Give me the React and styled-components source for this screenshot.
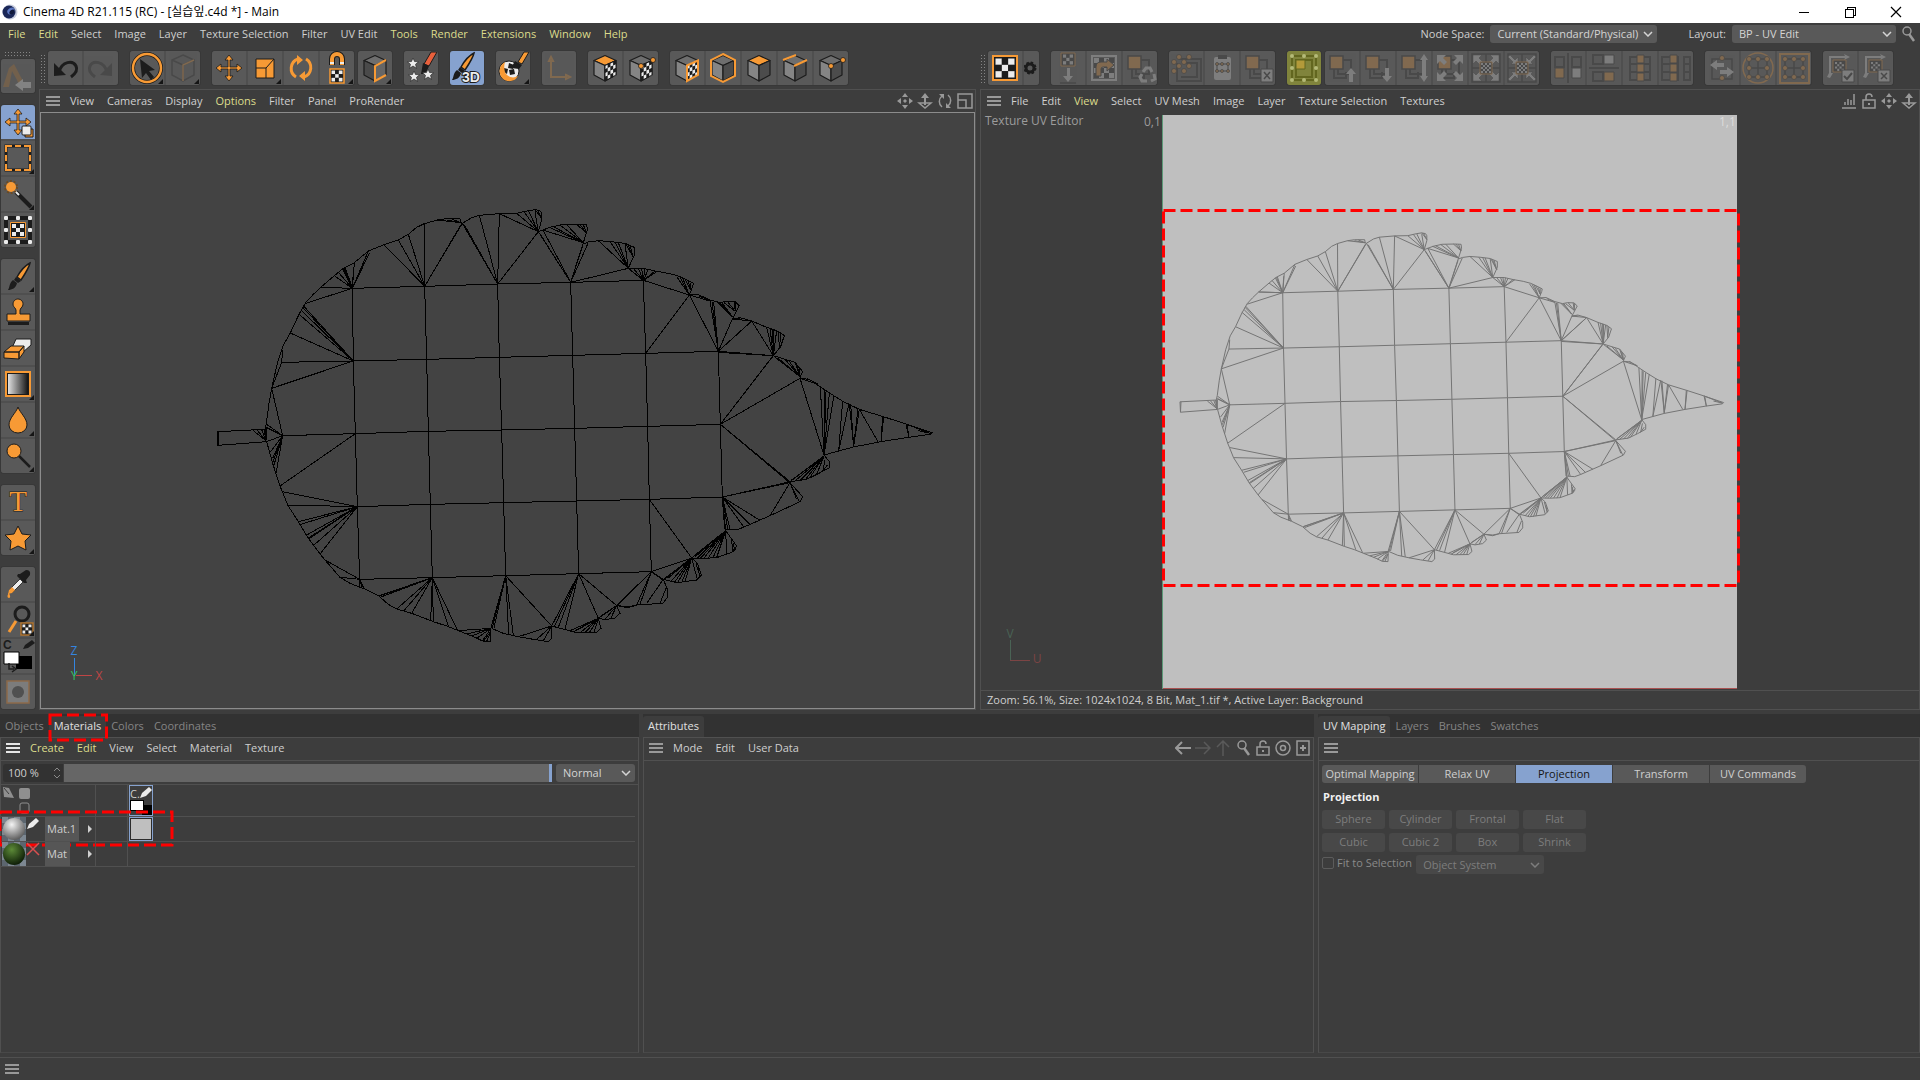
import React from 'react'
import styled, { createGlobalStyle, css } from 'styled-components'

const O = '#f79a35'
const K = '#1c1c1c'
const W = '#ececec'

/* ---------- leaf mesh ---------- */

const gridRows = [
  [362, 292, 457, 295, 674, 289, 893, 282, 1112, 277, 1330, 271],
  [245, 517, 460, 513, 680, 508, 898, 502, 1118, 496, 1337, 490, 1555, 484, 1720, 497],
  [248, 737, 466, 731, 685, 724, 905, 720, 1124, 715, 1343, 709, 1561, 703],
  [472, 950, 691, 943, 911, 938, 1130, 933, 1348, 928, 1567, 921],
  [479, 1168, 697, 1163, 917, 1157, 1136, 1151, 1354, 1145],
]

const gridCols = [
  [457, 295, 460, 513, 466, 731, 472, 950, 479, 1168],
  [674, 289, 680, 508, 685, 724, 691, 943, 697, 1163],
  [893, 282, 898, 502, 905, 720, 911, 938, 917, 1157],
  [1112, 277, 1118, 496, 1124, 715, 1130, 933, 1136, 1151],
  [1330, 271, 1337, 490, 1343, 709, 1348, 928, 1354, 1145],
  [1555, 484, 1561, 703, 1567, 921, 1577, 1022],
]

const outline = [
  [200, 755, 54, 766, 52, 725, 195, 718, 199, 700, 207, 640, 215, 595, 232, 520, 250, 465, 271, 429, 296, 375, 317, 338, 338, 315, 362, 292, 403, 257, 430, 235, 463, 218, 505, 183, 552, 164, 595, 150, 625, 133, 650, 112, 673, 101, 712, 90, 740, 86, 780, 86, 782, 98, 787, 100],
  [787, 100, 815, 83, 838, 76, 898, 71, 950, 70, 985, 62, 1005, 59, 1020, 62, 1025, 70, 1025, 90, 1015, 125],
  [1015, 125, 1050, 112, 1085, 104, 1135, 103, 1160, 104, 1162, 120, 1150, 158],
  [1150, 162, 1165, 156, 1195, 152, 1235, 155, 1275, 160, 1303, 172, 1303, 195, 1285, 235],
  [1285, 235, 1330, 235, 1365, 243, 1405, 250, 1435, 258, 1465, 272, 1480, 280, 1478, 290, 1468, 315],
  [1468, 315, 1495, 314, 1530, 330, 1560, 338, 1580, 334, 1605, 335, 1618, 347, 1597, 387],
  [1597, 387, 1620, 383, 1655, 393, 1700, 412, 1735, 424, 1753, 437, 1742, 470, 1720, 497],
  [1720, 497, 1755, 508, 1785, 517, 1808, 545, 1800, 563],
  [1800, 565, 1828, 568, 1860, 590, 1890, 610, 1930, 635, 1978, 658, 2050, 680, 2118, 702, 2165, 718, 2195, 728, 2190, 733, 2125, 742, 2043, 755, 1960, 771, 1916, 783, 1872, 795],
  [1872, 795, 1888, 815, 1888, 833, 1855, 851, 1820, 868, 1770, 875],
  [1770, 878, 1808, 920, 1800, 935, 1710, 977, 1630, 1012, 1608, 1020, 1578, 1018],
  [1577, 1022, 1610, 1068, 1600, 1085, 1550, 1103, 1510, 1105, 1475, 1104],
  [1475, 1104, 1492, 1120, 1504, 1155, 1490, 1170, 1430, 1178, 1390, 1168],
  [1390, 1168, 1403, 1200, 1403, 1222, 1388, 1240, 1310, 1245, 1285, 1253, 1250, 1247],
  [1250, 1247, 1260, 1270, 1245, 1284, 1215, 1289, 1195, 1285],
  [1195, 1285, 1203, 1315, 1190, 1327, 1130, 1328, 1055, 1308],
  [1055, 1308, 1056, 1345, 1045, 1355, 1000, 1348, 955, 1340, 910, 1330, 875, 1315],
  [873, 1313, 872, 1355, 850, 1354, 825, 1342, 775, 1322, 740, 1308, 700, 1295, 635, 1270, 590, 1257, 565, 1243, 535, 1217, 492, 1196, 450, 1180, 420, 1162, 375, 1110, 360, 1092, 325, 1045, 295, 995, 263, 945, 247, 905, 240, 888, 218, 820, 200, 755],
]

// first pair is the hub, the others are the rim points it fans out to
const fans = [
  [198, 752, 160, 722, 172, 721, 185, 719, 195, 718, 192, 718, 199, 718, 199, 712],
  [54, 766, 56, 725],
  [248, 737, 200, 712, 200, 703, 200, 755, 212, 785, 218, 805, 219, 815, 222, 825, 228, 850, 215, 595, 202, 715],
  [245, 517, 215, 595, 248, 480],
  [460, 513, 311, 348, 305, 362, 308, 352, 296, 372, 271, 429, 215, 595],
  [457, 295, 317, 340, 362, 292, 403, 257, 415, 247, 428, 236, 432, 234, 436, 233, 463, 218, 461, 230, 505, 183, 508, 190],
  [674, 289, 552, 164, 595, 150, 625, 133, 673, 101, 787, 100, 783, 104],
  [782, 98, 712, 90, 740, 90, 755, 87],
  [1015, 125, 898, 71, 950, 70, 972, 65, 985, 62, 1005, 64],
  [1025, 85, 1005, 59, 1012, 60],
  [893, 282, 787, 100, 794, 106, 838, 76, 898, 71, 1015, 125],
  [1150, 158, 1048, 112, 1028, 120, 1080, 105, 1100, 104, 1060, 110],
  [1160, 130, 1130, 103, 1140, 103, 1150, 104],
  [1112, 277, 1015, 125, 1019, 130, 1030, 122, 1150, 158, 1148, 168, 1165, 158, 1285, 235],
  [1285, 235, 1195, 152, 1230, 155, 1245, 156, 1255, 158, 1275, 162],
  [1301, 205, 1278, 162, 1284, 165, 1290, 167],
  [1330, 271, 1285, 235, 1300, 235, 1315, 234, 1325, 235, 1335, 236, 1345, 238, 1365, 243, 1372, 244, 1468, 315],
  [1468, 315, 1430, 260, 1440, 262, 1448, 264, 1337, 490],
  [1472, 300, 1455, 268, 1465, 274, 1472, 278],
  [1530, 333, 1468, 315, 1498, 318],
  [1555, 484, 1468, 315, 1530, 333, 1536, 335, 1541, 336, 1597, 387, 1655, 393, 1651, 397],
  [1597, 387, 1655, 393, 1620, 386],
  [1597, 380, 1555, 338, 1560, 338, 1566, 339],
  [1606, 364, 1572, 338, 1582, 334, 1602, 335, 1608, 338],
  [1720, 497, 1655, 393, 1700, 412, 1710, 414, 1718, 417, 1722, 418, 1730, 422, 1555, 487],
  [1738, 472, 1735, 424, 1743, 430],
  [1561, 703, 1720, 497, 1717, 500, 1800, 565, 1770, 875, 1770, 879],
  [1800, 560, 1722, 499, 1735, 505, 1755, 508, 1768, 514, 1785, 517, 1790, 524, 1797, 532],
  [1855, 583, 1800, 565, 1822, 566],
  [1872, 795, 1800, 565, 1861, 590, 1874, 600, 1878, 605, 1888, 610, 1902, 616],
  [1916, 783, 1928, 632, 1947, 640],
  [1961, 768, 1948, 642, 1952, 642, 1974, 656, 1978, 658],
  [2034, 755, 1978, 658],
  [2043, 754, 2051, 680, 2048, 680],
  [2127, 742, 2118, 702, 2121, 705],
  [2190, 730, 2118, 702, 2155, 722],
  [1872, 798, 1770, 875, 1775, 870, 1785, 873, 1800, 872, 1815, 870, 1828, 865, 1850, 853],
  [1868, 845, 1875, 810, 1882, 825],
  [1567, 921, 1770, 878, 1767, 876],
  [1770, 878, 1790, 928, 1797, 934, 1710, 977],
  [1567, 921, 1680, 991, 1650, 1003, 1632, 1012, 1590, 1018, 1583, 1018, 1574, 1018],
  [1577, 1022, 1475, 1104, 1480, 1099, 1485, 1101, 1492, 1104, 1502, 1104, 1512, 1104, 1525, 1104, 1538, 1105, 1550, 1103, 1580, 1092],
  [1598, 1085, 1595, 1050, 1600, 1060, 1606, 1070, 1608, 1075],
  [1475, 1104, 1348, 928, 1354, 1145],
  [1475, 1104, 1390, 1168, 1396, 1166, 1405, 1164, 1412, 1175, 1424, 1176, 1433, 1178, 1445, 1178, 1455, 1176, 1492, 1168],
  [1500, 1160, 1488, 1120, 1494, 1135],
  [1354, 1145, 1390, 1168, 1386, 1168, 1250, 1247, 1310, 1245, 1320, 1243],
  [1390, 1168, 1340, 1240, 1385, 1172],
  [1380, 1240, 1398, 1195],
  [1136, 1151, 1250, 1247, 1195, 1285, 1055, 1308, 1063, 1310, 1075, 1312, 1095, 1318],
  [1250, 1247, 1195, 1285, 1200, 1280, 1215, 1288, 1232, 1286],
  [1195, 1285, 1120, 1326, 1128, 1320, 1140, 1328, 1155, 1328, 1168, 1328, 1182, 1328, 1110, 1322],
  [1055, 1308, 955, 1340, 1010, 1348, 1030, 1352],
  [1285, 1250, 1250, 1247, 1310, 1245],
  [917, 1157, 1055, 1308, 940, 1336, 926, 1333, 882, 1313, 873, 1313, 877, 1313],
  [873, 1315, 775, 1322, 800, 1332, 815, 1338, 830, 1345, 848, 1352],
  [872, 1325, 850, 1354, 860, 1354],
  [697, 1163, 540, 1216, 543, 1221, 537, 1218, 590, 1257, 612, 1262, 635, 1270, 692, 1293, 700, 1295, 745, 1308, 772, 1320],
  [479, 1168, 375, 1110, 420, 1162, 480, 1193, 492, 1196, 487, 1196],
  [472, 950, 247, 905, 263, 945, 295, 995, 303, 1003, 320, 1035, 325, 1044, 328, 1046, 340, 1067, 360, 1092],
  [466, 731, 240, 888],
]

const line = (p) => p.reduce((d, v, i) => d + (i === 0 ? 'M' : i % 2 ? ' ' : 'L') + v, '')

const fan = (p) => {
  let d = ''
  for (let i = 2; i < p.length; i += 2) {
    d += `M${p[0]} ${p[1]}L${p[i]} ${p[i + 1]}`
  }
  return d
}

const leafPath = [...gridRows, ...gridCols, ...outline].map(line).join('') + fans.map(fan).join('')

const Leaf = ({ color, crisp, ...rest }) => (
  <g {...rest}>
    <path
      d={leafPath}
      fill='none'
      stroke={color}
      strokeWidth='1'
      vectorEffect='non-scaling-stroke'
      shapeRendering={crisp ? 'crispEdges' : 'auto'}
    />
  </g>
)

/* ---------- icons ---------- */

const Checker = ({ n = 4, dark = K, light = W, transform }) => {
  const cells = []
  for (let r = 0; r < n; r++) {
    for (let c = 0; c < n; c++) {
      cells.push(
        <rect key={r + '-' + c} x={c / n} y={r / n} width={1 / n} height={1 / n} fill={(r + c) % 2 ? dark : light} />
      )
    }
  }
  return <g transform={transform}>{cells}</g>
}

const Cube = ({ top = '#6e6e6e', left = '#858585', right = '#4c4c4c', checker, hot, children }) => (
  <>
    <g stroke={K} strokeWidth='1.2' strokeLinejoin='round'>
      <path d='M17 4.500L28 9.500 17 14.500 6 9.500z' fill={top} />
      <path d='M6 9.500L17 14.500V30L6 24z' fill={left} />
      <path d='M28 9.500L17 14.500V30L28 24z' fill={right} />
    </g>
    {checker && <Checker transform='matrix(11 -5 0 15 17 14.500)' />}
    {checker && <path d='M28 9.500L17 14.500V30L28 24z' fill='none' stroke={hot ? O : K} strokeWidth={hot ? 2 : 1} />}
    {children}
  </>
)

const Dots = ({ points, r = 2.5, fill = O }) =>
  points.map(([x, y]) => <circle key={x + ',' + y} cx={x} cy={y} r={r} fill={fill} stroke={K} strokeWidth='0.800' />)

const FourWay = () => (
  <path
    d='M17 4l4 5h-3v7h7v-3l5 4-5 4v-3h-7v7h3l-4 5-4-5h3v-7H9v3l-5-4 5-4v3h7V9h-3z'
    fill={O}
    stroke={K}
    strokeWidth='0.800'
  />
)

const Stack = () => (
  <>
    <path d='M13 9h13v14H13z' fill='none' stroke={K} strokeWidth='2' />
    <path d='M9 18v9h12v-6' fill='none' stroke={K} strokeWidth='2' />
    <path d='M5 5h13v13H5z' fill={O} stroke={K} strokeWidth='1.500' />
  </>
)

const arrowUp = 'M26 17l5 6h-3v8h-4v-8h-3z'
const arrowDown = 'M26 31l5-6h-3v-8h-4v8h-3z'
const cornerArrows =
  'M4 4h9l-3 3 4 4-3 3-4-4-3 3zM30 4h-9l3 3-4 4 3 3 4-4 3 3zM4 30h9l-3-3 4-4-3-3-4 4-3-3zM30 30h-9l3-3-4-4 3-3 4 4 3-3z'
const innerArrows =
  'M13 13H6l2-2-5-5 2-2 5 5 3-3zM21 13h7l-2-2 5-5-2-2-5 5-3-3zM13 21H6l2 2-5 5 2 2 5-5 3 3zM21 21h7l-2 2 5 5-2 2-5-5-3 3z'
const ring8 = [[8, 8], [17, 8], [26, 8], [8, 17], [26, 17], [8, 26], [17, 26], [26, 26]]

const Brush = () => (
  <>
    <path d='M29 4c-4 2-9 7-13 14l4 3c4-6 8-12 9-17z' fill={O} stroke={K} strokeWidth='1.500' />
    <path d='M15 18l5 4-3 2-4-3zM12 21l4 3c-1 5-5 7-9 7 2-3 1-7 5-10z' fill={K} />
  </>
)

const icons = {
  content: (
    <>
      <path d='M8 9l5-4 11 21h-6l-2-5-5-9-3 16H2z' fill='#c07828' />
      <path d='M30 23v6H22v3l-8-6 8-6v3z' fill='#fff' />
    </>
  ),
  undo: (
    <>
      <path d='M11 21C14 10 25 9 28 15c2 4-1 8-5 11' fill='none' stroke={K} strokeWidth='3' />
      <path d='M6 12v13l12-1z' fill={K} />
    </>
  ),
  redo: (
    <>
      <path d='M23 21C20 10 9 9 6 15c-2 4 1 8 5 11' fill='none' stroke={K} strokeWidth='3' />
      <path d='M28 12v13l-12-1z' fill={K} />
    </>
  ),
  live: (
    <>
      <circle cx='17' cy='17' r='14' fill='none' stroke={K} strokeWidth='4' />
      <circle cx='17' cy='17' r='14' fill='none' stroke={O} strokeWidth='2.500' />
      <path d='M10 8l15 11-6 1 5 6-3 3-5-7-4 5z' fill={K} />
    </>
  ),
  ghostCube: (
    <>
      <path d='M17 4L28 9v15L17 30 6 24V9zM6 9l11 5M17 14v16M17 14l11-5' fill='none' stroke={K} strokeWidth='1.500' />
      <path d='M28 9l-11 5v16' fill='none' stroke={O} strokeWidth='1.500' />
    </>
  ),
  move: <FourWay />,
  moveTool: (
    <>
      <FourWay />
      <path d='M24 24h8v8h-8z' fill={O} stroke={K} />
      <rect x='21' y='21' width='9' height='9' rx='1' fill={W} stroke={K} />
    </>
  ),
  scale: (
    <>
      <path d='M8 8h18v19H8z' fill={O} stroke={K} />
      <path d='M8 17h10v10M18 17l8-9' fill='none' stroke={K} />
    </>
  ),
  rotate: (
    <>
      <g fill='none' stroke={O} strokeWidth='3'>
        <path d='M12 26A10 10 0 0 1 14 8' />
        <path d='M22 8a10 10 0 0 1-2 18' />
      </g>
      <path d='M13 4l6 5-6 5zM21 30l-6-5 6-5z' fill={O} />
    </>
  ),
  magnet: (
    <>
      <path d='M12 14V8a5 5 0 0 1 10 0v6' fill='none' stroke={K} strokeWidth='6' />
      <path d='M12 14V8a5 5 0 0 1 10 0v6' fill='none' stroke={O} strokeWidth='4' />
      <path d='M10 12h4M20 12h4' stroke={W} strokeWidth='2' />
      <path d='M10 18h14v14H10z' fill={K} stroke={O} strokeWidth='1.500' />
      <Checker n={3} transform='matrix(11 0 0 11 11.500 19.500)' />
    </>
  ),
  modelCube: (
    <Cube left='#4a4a4a' right='#666'>
      <path d='M28 9l-11 6v15l11-6' fill='none' stroke={O} strokeWidth='2' />
    </Cube>
  ),
  wizard: (
    <>
      <path d='M20 13L27 1h6L25 15z' fill='#e8603c' stroke={K} />
      <path d='M19 12l6 3c-2 6-4 8-8 8z' fill={K} />
      <g fill={W} stroke={K} strokeWidth='0.600'>
        <path d='M9 7l1.500 3.500 4 .300-3 2.500 1 4L9 15l-3.500 2.300 1-4-3-2.500 4-.300z' />
        <path d='M10 20l1.500 3.500 4 .300-3 2.500 1 4L10 28l-3.500 2.300 1-4-3-2.500 4-.300z' />
        <path d='M24 18l1.500 3.500 4 .300-3 2.500 1 4L24 26l-3.500 2.300 1-4-3-2.500 4-.300z' />
      </g>
    </>
  ),
  paint3d: (
    <>
      <g transform='translate(-5 -2)'>
        <Brush />
      </g>
      <text x='12' y='31' fontFamily='Liberation Sans' fontWeight='700' fontSize='14' fill={W} stroke={K} strokeWidth='2' paintOrder='stroke'>
        3D
      </text>
    </>
  ),
  paintBall: (
    <>
      <circle cx='13' cy='20' r='10' fill={W} stroke={K} />
      <path d='M13 12l5 2-1 4-5-1zM8 17l4 1-1 5-3-2zM13 19l5-1 1 5-5 1z' fill={K} />
      <path d='M9 11C3 14 2 22 6 27c5 5 13 4 16-2-5 3-11 1-13-4-1-3-1-7 0-10z' fill={O} />
      <path d='M22 11L28 1h5l-7 12z' fill={O} stroke={K} />
      <path d='M19 10l7 4-3 4-8-1z' fill={K} />
    </>
  ),
  axis: (
    <g fill='none' stroke={O} strokeWidth='2'>
      <path d='M9 10v16h15' />
      <path d='M7 10l2-4 2 4zM24 24l4 2-4 2z' />
    </g>
  ),
  polyChecker: <Cube top={O} checker />,
  pointChecker: (
    <Cube checker>
      <Dots points={[[17, 15], [29, 9]]} />
    </Cube>
  ),
  uvCube: <Cube checker hot />,
  objectCube: (
    <Cube>
      <path d='M17 3L29 9v16L17 31 5 25V9z' fill='none' stroke={O} strokeWidth='2' />
    </Cube>
  ),
  polyCube: <Cube top={O} />,
  edgeCube: (
    <Cube>
      <path d='M5 9l13-5M16 15l13-6' stroke={O} strokeWidth='2' />
    </Cube>
  ),
  pointCube: (
    <Cube>
      <Dots points={[[17, 15], [29, 9]]} />
    </Cube>
  ),
  checkerBoard: (
    <>
      <path d='M5 5h24v24H5z' fill={K} stroke={O} strokeWidth='2' />
      <Checker n={3} transform='matrix(19 0 0 19 7.500 7.500)' />
    </>
  ),
  gear: (
    <>
      <circle cx='6' cy='17' r='4' fill='none' stroke={K} strokeWidth='3' />
      <circle cx='6' cy='17' r='5.500' fill='none' stroke={K} strokeWidth='2' strokeDasharray='2.500 1.820' />
    </>
  ),
  texDown: (
    <>
      <path d='M10 2h14v13H10z' fill={K} stroke={O} />
      <Checker n={3} transform='matrix(10 0 0 10 12 3.500)' />
      <path d='M16 17h3v8h3l-5 6-5-6h4z' fill={W} />
      <path d='M9 32h16' stroke={K} strokeWidth='1.500' />
    </>
  ),
  texArrow: (
    <>
      <path d='M5 5h24v24H5z' fill='none' stroke={W} strokeWidth='2' />
      <Checker transform='matrix(20 0 0 20 7 7)' />
      <path d='M9 25v-9q0-5 5-5h6V8l7 6-7 6v-4h-4q-2 0-2 2v7z' fill={O} stroke={K} />
    </>
  ),
  recycle: (
    <>
      <Stack />
      <g fill='none' stroke={W} strokeWidth='3'>
        <path d='M20 21l3-4h4l2 4M31 23l1 5-4 2M24 30h-5l-2-4 2-3' />
      </g>
    </>
  ),
  points: (
    <>
      <path d='M10 8h22v22H8V12' fill='none' stroke={K} strokeWidth='2' />
      <path d='M14 12h14v14H12' fill='none' stroke={K} strokeWidth='2' />
      <Dots points={[[10, 6], [20, 6], [5, 11], [15, 11], [10, 15], [20, 15], [5, 20], [15, 20]]} />
    </>
  ),
  clipboard: (
    <>
      <rect x='9' y='6' width='17' height='23' rx='2' fill={W} />
      <path d='M13 4h9v4h-9z' fill={K} />
      <path d='M12 13h11v7H12z' fill='none' stroke={K} />
      <Dots r={1.5} points={[[12, 13], [17, 13], [23, 13], [12, 20], [17, 20], [23, 20]]} />
    </>
  ),
  stackX: (
    <>
      <Stack />
      <path d='M20 18h12v13H20z' fill={W} stroke={K} />
      <path d='M23 21l6 7M29 21l-6 7' stroke={K} strokeWidth='1.500' />
    </>
  ),
  frame: (
    <>
      <path d='M5 5h24v24H5z' fill='none' stroke='#62661f' strokeWidth='2' />
      <path d='M9 9h16v17H9z' fill='none' stroke='#62661f' strokeWidth='2' />
      <path d='M9 9h9v9H9z' fill='#b39a3a' stroke='#62661f' />
      <g fill='#b4ba78'>
        {[[5, 5], [17, 5], [29, 5], [5, 17], [29, 17], [5, 29], [17, 29], [29, 29]].map(([x, y]) => (
          <circle key={x + ',' + y} cx={x} cy={y} r='2' />
        ))}
      </g>
    </>
  ),
  stackUp: (
    <>
      <Stack />
      <path d={arrowUp} fill={W} />
    </>
  ),
  stackDown: (
    <>
      <Stack />
      <path d={arrowDown} fill={W} />
    </>
  ),
  stackBoth: (
    <>
      <Stack />
      <path d='M27 3l4 6h-2v16h2l-4 6-4-6h2V9h-2z' fill={W} />
    </>
  ),
  stackOut: (
    <>
      <Stack />
      <path d={cornerArrows} fill={W} />
    </>
  ),
  texOut: (
    <>
      <path d='M3 3h28v28H3zM3 17h28M17 3v28' fill='none' stroke={K} strokeWidth='1.500' />
      <path d={cornerArrows} fill={W} stroke={K} strokeWidth='0.500' />
      <path d='M11 11h12v12H11z' fill={K} stroke={O} />
      <Checker n={5} transform='matrix(10 0 0 10 12 12)' />
    </>
  ),
  texIn: (
    <>
      <path d='M3 3h28v28H3zM3 17h28M17 3v28' fill='none' stroke={K} strokeWidth='1.500' />
      <path d={innerArrows} fill={W} stroke={K} strokeWidth='0.500' />
      <path d='M11 11h12v12H11z' fill={K} stroke={O} />
      <Checker n={5} transform='matrix(10 0 0 10 12 12)' />
    </>
  ),
  mirrorH: (
    <>
      <path d='M17 2v30' stroke={K} strokeWidth='2' />
      <path d='M4 6h9v10H4zM21 6h9v10h-9z' fill='none' stroke={K} strokeWidth='2' />
      <path d='M4 17h9v10H4z' fill={O} stroke={K} />
      <path d='M21 17h9v10h-9z' fill={W} stroke={K} />
    </>
  ),
  mirrorV: (
    <>
      <path d='M2 17h30' stroke={K} strokeWidth='2' />
      <path d='M6 4h10v9H6zM6 21h10v9H6z' fill='none' stroke={K} strokeWidth='2' />
      <path d='M17 4h10v9H17z' fill={W} stroke={K} />
      <path d='M17 21h10v9H17z' fill={O} stroke={K} />
    </>
  ),
  stripA: (
    <>
      <path d='M7 6h20v23H7zM7 13h20M7 21h20' fill='none' stroke={K} strokeWidth='2' />
      <path d='M14 4h7v8h-7zM14 13h7v8h-7zM14 22h7v8h-7z' fill={O} stroke={K} />
    </>
  ),
  stripB: (
    <>
      <path d='M3 6h16v23H3zM3 13h16M3 21h16M25 6h6v23h-6zM25 13h6M25 21h6' fill='none' stroke={K} strokeWidth='2' />
      <path d='M11 4h7v8h-7zM11 13h7v8h-7zM11 22h7v8h-7z' fill={O} stroke={K} />
    </>
  ),
  swap: (
    <>
      <path d='M7 8h20v20H7z' fill='none' stroke={K} strokeWidth='1.500' />
      <path d='M5 14l7-5v3h7v4h-7v3zM29 21l-7-5v3h-7v4h7v3z' fill={W} />
      <Dots points={[[17, 7], [17, 27]]} />
    </>
  ),
  circleFit: (
    <>
      <circle cx='17' cy='17' r='15' fill='none' stroke={O} strokeWidth='1.500' />
      <path d='M8 8h18v18H8zM8 17h18M17 8v18' fill='none' stroke={K} strokeWidth='1.500' />
      <Dots points={ring8} />
    </>
  ),
  squareFit: (
    <>
      <path d='M3 3h29v29H3z' fill='none' stroke={O} strokeWidth='2' />
      <path d='M8 8h18v18H8zM8 17h18M17 8v18' fill='none' stroke={K} strokeWidth='1.500' />
      <Dots points={ring8} />
    </>
  ),
  applyUv: (
    <>
      <path d='M4 26l2-4V5h16l-1-2 6 3-6 3 1-2H8v15l2 0-3 5z' fill={W} />
      <path d='M10 9h13v12H10z' fill={K} stroke={O} />
      <Checker transform='matrix(9 0 0 9 12 11)' />
      <path d='M19 19h12v12H19z' fill={W} stroke={K} />
      <path d='M21 25l3 3 5-6' fill='none' stroke={K} strokeWidth='2' />
    </>
  ),
  cancelUv: (
    <>
      <path d='M4 26l2-4V5h16l-1-2 6 3-6 3 1-2H8v15l2 0-3 5z' fill={W} />
      <path d='M10 9h13v12H10z' fill={K} stroke={O} />
      <Checker transform='matrix(9 0 0 9 12 11)' />
      <path d='M19 19h12v12H19z' fill={W} stroke={K} />
      <path d='M22 22l6 6M28 22l-6 6' stroke={K} strokeWidth='1.500' />
    </>
  ),
  marquee: (
    <>
      <path d='M5 5h24v24H5z' fill='none' stroke={K} strokeWidth='3' />
      <path
        d='M5 11V5h6M14 5h6M23 5h6v6M29 14v6M29 23v6h-6M20 29h-6M11 29H5v-6M5 20v-6'
        fill='none'
        stroke={O}
        strokeWidth='2'
      />
    </>
  ),
  wand: (
    <>
      <path d='M15 15l15 15' stroke={K} strokeWidth='4' />
      <path d='M14 14l4 4' stroke={W} strokeWidth='2' />
      <circle cx='10' cy='10' r='6' fill='none' stroke='#6a4a24' strokeWidth='2' strokeDasharray='2 1.770' />
      <circle cx='10' cy='10' r='5' fill={O} />
    </>
  ),
  transformTex: (
    <>
      <path d='M5 5h24v24H5z' fill='none' stroke={K} strokeWidth='4' />
      <path d='M9.500 9.500h15v15h-15z' fill={K} stroke={O} />
      <Checker n={3} transform='matrix(12 0 0 12 11 11)' />
      <g fill={W}>
        {[[3, 3], [15, 3], [27, 3], [3, 15], [27, 15], [3, 27], [15, 27], [27, 27]].map(([x, y]) => (
          <rect key={x + ',' + y} x={x} y={y} width='4' height='4' rx='1' />
        ))}
      </g>
    </>
  ),
  brush: <Brush />,
  stamp: (
    <>
      <path d='M12 9a5 5 0 1 1 8 4l-1 2v4h10v7H6v-7h9v-4l-1-2c-1-1-2-2-2-4z' fill={O} stroke={K} />
      <path d='M7 27h21v3H7z' fill={K} />
    </>
  ),
  eraser: (
    <>
      <path d='M15 8h15v6l-9 8-10-5z' fill={W} stroke={K} />
      <path d='M10 15h13l-5 6H3zM3 21h15v7L3 27zM23 15v6l-5 7v-7z' fill={O} stroke={K} strokeLinejoin='round' />
    </>
  ),
  gradient: (
    <>
      <defs>
        <linearGradient id='ramp'>
          <stop offset='0' stopColor='#e0e0e0' />
          <stop offset='1' stopColor='#151515' />
        </linearGradient>
      </defs>
      <path d='M5 5h24v24H5z' fill={K} stroke={O} strokeWidth='2' />
      <path d='M7 7h20v20H7z' fill='url(#ramp)' />
    </>
  ),
  drop: <path d='M17 4c2 6 9 11 9 18a9 8 0 0 1-18 0C8 15 15 10 17 4z' fill={O} stroke={K} />,
  lens: (
    <>
      <path d='M18 17l11 11' stroke={K} strokeWidth='2.500' />
      <circle cx='13' cy='12' r='7' fill={O} stroke={K} />
    </>
  ),
  text: (
    <text x='17' y='26' textAnchor='middle' fontFamily='Liberation Serif' fontSize='29' fill={O} stroke={K} strokeWidth='1' paintOrder='stroke'>
      T
    </text>
  ),
  star: <path d='M17 5l4 8 9 1-6 6 1 9-8-4-8 4 1-9-6-6 9-1z' fill={O} stroke={K} strokeLinejoin='round' />,
  picker: (
    <>
      <path d='M19 7l6-4q5 0 4 5l-4 5 1 3-3 0-7-7 1-2z' fill={K} />
      <path d='M19 12l3 3-10 10-4 1 1-4z' fill={W} stroke={K} strokeWidth='0.800' />
      <path d='M11 20l3 3-3 3-4 1 1-4zM8 26c1 2 2 5 0 5s-2-3 0-5z' fill={O} />
    </>
  ),
  zoomTex: (
    <>
      <path d='M15 18L8 29' stroke={O} strokeWidth='3' />
      <circle cx='21' cy='11' r='7' fill='none' stroke={K} strokeWidth='3' />
      <path d='M20 20h12v12H20z' fill={K} stroke='#b07430' strokeWidth='1.500' />
      <Checker n={3} transform='matrix(9 0 0 9 21.500 21.500)' />
    </>
  ),
  colors: (
    <>
      <path d='M15 17h16v13H15z' fill='#000' />
      <path d='M3 13h15v12H3z' fill='#fff' stroke='#000' />
      <path d='M8 24v6h5M11 27l4 3-4 3' fill='none' stroke={K} strokeWidth='1.500' />
      <text x='2' y='10' fontFamily='Liberation Sans' fontWeight='700' fontSize='12' fill={K}>
        C
      </text>
      <path d='M22 10l2-4 7-5 3 3-7 5z' fill={K} />
    </>
  ),
  mask: (
    <>
      <path d='M6 6h22v22H6z' fill='#7c7c7c' stroke='#8c6a4a' strokeWidth='1.500' />
      <circle cx='17' cy='17' r='6' fill='#505050' />
    </>
  ),
}

/* ---------- small line icons ---------- */

const lineIcons = {
  pan: <path d='M8 0l3 4H5zM8 16l3-4H5zM0 8l4-3v6zM16 8l-4-3v6zM6 8l2-2 2 2-2 2z' fill='currentColor' />,
  dolly: (
    <>
      <path d='M8 0l4 5H4zM7 4h2v8H7z' fill='currentColor' />
      <path d='M2 10h12l-6 5z' fill='none' stroke='currentColor' strokeWidth='1.500' />
    </>
  ),
  orbit: (
    <>
      <path d='M5 14A7 7 0 0 1 5 3M11 2a7 7 0 0 1 0 11' fill='none' stroke='currentColor' strokeWidth='1.500' />
      <path d='M2 1h5v5zM14 15H9v-5z' fill='currentColor' />
    </>
  ),
  maximize: <path d='M1 1h14v14H1zM1 7h8v8' fill='none' stroke='currentColor' strokeWidth='1.500' />,
  histogram: <path d='M1 15h14M4 12V9M7 12V6M10 12V7M13 12V1' fill='none' stroke='currentColor' strokeWidth='1.500' />,
  lock: (
    <>
      <path d='M2 7h12v8H2zM5 7V4a3 3 0 0 1 6 0' fill='none' stroke='currentColor' strokeWidth='1.500' />
      <path d='M7 10h2v2H7z' fill='currentColor' />
    </>
  ),
  back: <path d='M16 8H1M7 2L1 8l6 6' fill='none' stroke='currentColor' strokeWidth='2' />,
  forward: <path d='M0 8h15M9 2l6 6-6 6' fill='none' stroke='currentColor' strokeWidth='1.500' />,
  up: <path d='M8 16V1M2 7l6-6 6 6' fill='none' stroke='currentColor' strokeWidth='1.500' />,
  search: (
    <>
      <circle cx='7' cy='5' r='4' fill='none' stroke='currentColor' strokeWidth='1.500' />
      <path d='M9 8l5 7' stroke='currentColor' strokeWidth='2.500' />
    </>
  ),
  target: (
    <g fill='none' stroke='currentColor' strokeWidth='1.500'>
      <circle cx='8' cy='8' r='7' />
      <circle cx='8' cy='8' r='2.500' />
    </g>
  ),
  add: (
    <>
      <path d='M2 1h12v14H2z' fill='none' stroke='currentColor' strokeWidth='1.500' />
      <path d='M8 5v6M5 8h6' stroke='currentColor' strokeWidth='2' />
    </>
  ),
  minimize: <path d='M3 8h10' stroke='currentColor' shapeRendering='crispEdges' />,
  restore: <path d='M3 5h8v8H3zM5 5V3h8v8h-2' fill='none' stroke='currentColor' shapeRendering='crispEdges' />,
  close: <path d='M3 3l10 10M13 3L3 13' stroke='currentColor' strokeWidth='1.200' />,
}

/* ---------- shared pieces ---------- */

const Burger = ({ bright }) => (
  <BurgerButton type='button' aria-label='Panel menu' $bright={bright}>
    <span />
    <span />
    <span />
  </BurgerButton>
)

const MenuItems = ({ items, hot = [], label }) => (
  <Menu aria-label={label}>
    {items.map((item) => (
      <MenuButton type='button' key={item} $hot={hot.includes(item)}>
        {item}
      </MenuButton>
    ))}
  </Menu>
)

const LineButton = ({ name, dim }) => (
  <SmallButton type='button' aria-label={name} $dim={dim}>
    <svg width='16' height='16' viewBox='0 0 16 16'>
      {lineIcons[name]}
    </svg>
  </SmallButton>
)

const Tools = ({ items, column, tight }) => (
  <ToolGroup $column={column} $tight={tight}>
    {items.map(({ name, off, active, more, olive, half }) => (
      <ToolButton type='button' key={name} aria-label={name} $active={active} $olive={olive} $half={half}>
        <svg width={half ? 15 : 34} height='34' viewBox={half ? '0 0 15 34' : '0 0 34 34'}>
          <g opacity={off ? 0.25 : 1}>{icons[name]}</g>
          {more && <path d='M28 33l5-5v5z' fill='#151515' />}
        </svg>
      </ToolButton>
    ))}
  </ToolGroup>
)

const DropDown = ({ label, value, width, off }) => (
  <SelectBox $width={width} $off={off}>
    <select aria-label={label} defaultValue={value} disabled={off}>
      <option>{value}</option>
    </select>
    <svg width='10' height='6' viewBox='0 0 10 6'>
      <path d='M1 1l4 4 4-4' fill='none' stroke='currentColor' strokeWidth='1.500' />
    </svg>
  </SelectBox>
)

const off = (...names) => names.map((name) => ({ name, off: true }))

const leftTools = [
  [{ name: 'content', off: true }],
  [{ name: 'moveTool', active: true }, { name: 'marquee', more: true }, { name: 'wand', more: true }, { name: 'transformTex' }],
  [
    { name: 'brush', more: true },
    { name: 'stamp' },
    { name: 'eraser' },
    { name: 'gradient', more: true },
    { name: 'drop', more: true },
    { name: 'lens', more: true },
  ],
  [{ name: 'text' }, { name: 'star', more: true }],
  [{ name: 'picker' }, { name: 'zoomTex', more: true }, { name: 'colors' }, { name: 'mask' }],
]

const mainTools = [
  [{ name: 'undo' }, { name: 'redo', off: true }],
  [{ name: 'live', more: true }, { name: 'ghostCube', off: true, more: true }],
  [{ name: 'move' }, { name: 'scale', more: true }, { name: 'rotate' }, { name: 'magnet', more: true }],
  [{ name: 'modelCube', more: true }],
  [{ name: 'wizard' }],
  [{ name: 'paint3d', active: true }],
  [{ name: 'paintBall', more: true }],
  [{ name: 'axis', off: true }],
  [{ name: 'polyChecker' }, { name: 'pointChecker' }],
  [{ name: 'uvCube' }, { name: 'objectCube' }, { name: 'polyCube' }, { name: 'edgeCube' }, { name: 'pointCube' }],
]

const uvTools = [
  [{ name: 'checkerBoard' }, { name: 'gear', half: true }],
  off('texDown', 'texArrow', 'recycle'),
  off('points', 'clipboard', 'stackX'),
  [{ name: 'frame', olive: true }],
  off('stackUp', 'stackDown', 'stackBoth', 'stackOut', 'texOut', 'texIn'),
  off('mirrorH', 'mirrorV', 'stripA', 'stripB'),
  off('swap', 'circleFit', 'squareFit'),
  off('applyUv', 'cancelUv'),
]

/* ---------- parts of the window ---------- */

const TitleBar = () => (
  <Title>
    <svg width='16' height='16' viewBox='0 0 16 16'>
      <circle cx='8' cy='8' r='7.500' fill='#c9cede' />
      <circle cx='7' cy='8' r='6.500' fill='#1a2757' />
      <ellipse cx='9' cy='7' rx='4' ry='3' fill='#5d78c4' transform='rotate(-35 9 7)' />
      <ellipse cx='10' cy='8' rx='3' ry='2' fill='#10183a' transform='rotate(-35 10 8)' />
    </svg>
    <h1>Cinema 4D R21.115 (RC) - [실습잎.c4d *] - Main</h1>
    <WindowButtons>
      {['minimize', 'restore', 'close'].map((name) => (
        <button type='button' key={name} aria-label={name}>
          <svg width='16' height='16' viewBox='0 0 16 16'>
            {lineIcons[name]}
          </svg>
        </button>
      ))}
    </WindowButtons>
  </Title>
)

const MainMenu = () => (
  <MenuBar>
    <MenuItems
      label='Main menu'
      items={['File', 'Edit', 'Select', 'Image', 'Layer', 'Texture Selection', 'Filter', 'UV Edit', 'Tools', 'Render', 'Extensions', 'Window', 'Help']}
      hot={['File', 'Edit', 'Tools', 'Render', 'Extensions', 'Window', 'Help']}
    />
    <Fill />
    <BarLabel>Node Space:</BarLabel>
    <DropDown label='Node Space' value='Current (Standard/Physical)' width={167} />
    <BarLabel $wide>Layout:</BarLabel>
    <DropDown label='Layout' value='BP - UV Edit' width={164} />
    <LineButton name='search' />
  </MenuBar>
)

const Viewport = () => (
  <Panel>
    <PanelHead>
      <Burger />
      <MenuItems label='View menu' items={['View', 'Cameras', 'Display', 'Options', 'Filter', 'Panel', 'ProRender']} hot={['Options']} />
      <Fill />
      <IconRow>
        <LineButton name='pan' />
        <LineButton name='dolly' />
        <LineButton name='orbit' />
        <LineButton name='maximize' />
      </IconRow>
    </PanelHead>
    <Stage $framed>
      <svg viewBox='0 0 933 595'>
        <Leaf color='#000' crisp transform='translate(159 77) scale(0.33333)' />
        <g fontFamily='Open Sans' fontSize='12' textAnchor='middle'>
          <path d='M33.500 545v18' stroke='#3485e0' />
          <path d='M35 562.500h16' stroke='#c04545' />
          <text x='33' y='542' fill='#3485e0'>Z</text>
          <text x='33' y='567' fill='#35c060'>Y</text>
          <text x='58' y='567' fill='#c04545'>X</text>
        </g>
      </svg>
    </Stage>
  </Panel>
)

const UvEditor = () => (
  <Panel>
    <PanelHead>
      <Burger />
      <MenuItems
        label='Texture view menu'
        items={['File', 'Edit', 'View', 'Select', 'UV Mesh', 'Image', 'Layer', 'Texture Selection', 'Textures']}
        hot={['View']}
      />
      <Fill />
      <IconRow>
        <LineButton name='histogram' />
        <LineButton name='lock' />
        <LineButton name='pan' />
        <LineButton name='dolly' />
      </IconRow>
    </PanelHead>
    <Stage>
      <svg viewBox='0 -1 938 578'>
        <rect x='182' y='2' width='574' height='574' fill='#bfbfbf' />
        <path d='M181.500 2v574' stroke='#5c9a78' />
        <path d='M182 575.500h574' stroke='#a85050' />
        <Leaf color='#757575' transform='translate(185.800 104.900) scale(0.25367)' />
        <rect x='182.500' y='97.500' width='575' height='375' fill='none' stroke='#f00' strokeWidth='3' strokeDasharray='12 5' />
        <g fontFamily='Open Sans' fontSize='12' fill='#9c9c9c'>
          <text x='4' y='12'>Texture UV Editor</text>
          <text x='163' y='13'>0,1</text>
          <text x='738' y='13' fill='#dcdcdc'>1,1</text>
        </g>
        <g fontFamily='Open Sans' fontSize='12' textAnchor='middle'>
          <path d='M29.500 527v21' stroke='#4a6355' />
          <path d='M29 547.500h20' stroke='#7c4444' />
          <text x='29' y='525' fill='#4a6355'>V</text>
          <text x='56' y='550' fill='#7c4444'>U</text>
        </g>
      </svg>
    </Stage>
    <PanelFoot>Zoom: 56.1%, Size: 1024x1024, 8 Bit, Mat_1.tif *, Active Layer: Background</PanelFoot>
  </Panel>
)

const DashedBox = () => (
  <svg width='100%' height='100%'>
    <rect x='0' y='0' width='100%' height='100%' fill='none' stroke='#f00' strokeWidth='3' strokeDasharray='12 5' />
  </svg>
)

const Ball = ({ id, from, to }) => (
  <svg width='24' height='24' viewBox='0 0 24 24'>
    <defs>
      <radialGradient id={id} cx='0.400' cy='0.300' r='0.700'>
        <stop offset='0' stopColor={from} />
        <stop offset='1' stopColor={to} />
      </radialGradient>
    </defs>
    <Checker dark='#5c666f' light='#7d8892' transform='matrix(24 0 0 24 0 0)' />
    <circle cx='12' cy='12' r='11' fill={`url(#${id})`} />
  </svg>
)

const PenIcon = ({ color = W }) => (
  <svg width='14' height='14' viewBox='0 0 14 14'>
    <path d='M1 12l2-5 7-6 3 3-6 6z' fill={color} />
  </svg>
)

const Materials = () => (
  <Dock>
    <TabBar>
      <Tab type='button'>Objects</Tab>
      <Tab type='button' $active>
        Materials
        <TabMark>
          <DashedBox />
        </TabMark>
      </Tab>
      <Tab type='button'>Colors</Tab>
      <Tab type='button'>Coordinates</Tab>
    </TabBar>
    <DockBody>
      <DockHead>
        <Burger bright />
        <MenuItems label='Materials menu' items={['Create', 'Edit', 'View', 'Select', 'Material', 'Texture']} hot={['Create', 'Edit']} />
      </DockHead>
      <BlendRow>
        <Percent>
          <input aria-label='Layer opacity' defaultValue='100 %' />
          <svg width='8' height='12' viewBox='0 0 8 12'>
            <path d='M1 4l3-3 3 3M1 8l3 3 3-3' fill='none' stroke='#8a8a8a' />
          </svg>
        </Percent>
        <Slider type='range' aria-label='Opacity' min='0' max='100' defaultValue='100' />
        <DropDown label='Blend mode' value='Normal' width={79} />
      </BlendRow>
      <LayerRow $tall>
        <LayerCell $wide>
          <svg width='30' height='31' viewBox='0 0 30 31'>
            <path d='M1 2l6 1 5 10-10-1z' fill='#8f8f8f' />
            <path d='M2 3l5 6' stroke='#3d3d3d' />
            <rect x='17' y='3' width='11' height='11' rx='2' fill='#8f8f8f' />
            <rect x='18' y='18' width='9' height='10' rx='2' fill='none' stroke='#8f8f8f' />
          </svg>
        </LayerCell>
        <LayerCell />
        <Channel>
          <span>C.</span>
          <PenIcon />
          <i />
        </Channel>
      </LayerRow>
      <LayerRow>
        <LayerCell $wide>
          <Ball id='greyBall' from='#f4f4f4' to='#5f5f5f' />
          <PenIcon />
          <MaterialName>Mat.1</MaterialName>
          <Arrow />
        </LayerCell>
        <LayerCell />
        <Swatch />
        <RowMark>
          <DashedBox />
        </RowMark>
      </LayerRow>
      <LayerRow>
        <LayerCell $wide>
          <Ball id='greenBall' from='#5c8a38' to='#0f1f08' />
          <svg width='14' height='14' viewBox='0 0 14 14'>
            <path d='M1 1l12 12M13 1L1 13' stroke='#d85050' strokeWidth='1.500' />
          </svg>
          <MaterialName $short>Mat</MaterialName>
          <Arrow />
        </LayerCell>
        <LayerCell />
      </LayerRow>
    </DockBody>
  </Dock>
)

const Attributes = () => (
  <Dock>
    <TabBar>
      <Tab type='button' $active>Attributes</Tab>
    </TabBar>
    <DockBody>
      <DockHead>
        <Burger />
        <MenuItems label='Attributes menu' items={['Mode', 'Edit', 'User Data']} />
        <Fill />
        <IconRow>
          <LineButton name='back' />
          <LineButton name='forward' dim />
          <LineButton name='up' dim />
          <LineButton name='search' />
          <LineButton name='lock' />
          <LineButton name='target' />
          <LineButton name='add' />
        </IconRow>
      </DockHead>
    </DockBody>
  </Dock>
)

const UvMapping = () => (
  <Dock>
    <TabBar>
      <Tab type='button' $active>UV Mapping</Tab>
      <Tab type='button'>Layers</Tab>
      <Tab type='button'>Brushes</Tab>
      <Tab type='button'>Swatches</Tab>
    </TabBar>
    <DockBody>
      <DockHead>
        <Burger />
      </DockHead>
      <MappingBody>
        <Segments>
          {['Optimal Mapping', 'Relax UV', 'Projection', 'Transform', 'UV Commands'].map((name) => (
            <Segment type='button' key={name} $active={name === 'Projection'}>
              {name}
            </Segment>
          ))}
        </Segments>
        <h2>Projection</h2>
        <ProjectionGrid>
          {['Sphere', 'Cylinder', 'Frontal', 'Flat', 'Cubic', 'Cubic 2', 'Box', 'Shrink'].map((name) => (
            <button type='button' key={name} disabled>
              {name}
            </button>
          ))}
        </ProjectionGrid>
        <FitRow>
          <label>
            <input type='checkbox' disabled />
            Fit to Selection
          </label>
          <DropDown label='Projection space' value='Object System' width={128} off />
        </FitRow>
      </MappingBody>
    </DockBody>
  </Dock>
)

function App() {
  return (
    <>
      <GlobalStyle />
      <Shell>
        <TitleBar />
        <MainMenu />
        <Upper>
          <SideBar>
            <Grip $flat />
            {leftTools.map((items) => (
              <Tools key={items[0].name} items={items} column />
            ))}
          </SideBar>
          <Views>
            <ViewColumn>
              <ToolBar>
                <Grip />
                {mainTools.map((items) => (
                  <Tools key={items[0].name} items={items} tight={items[0].name === 'modelCube'} />
                ))}
              </ToolBar>
              <Viewport />
            </ViewColumn>
            <ViewColumn>
              <ToolBar>
                <Grip />
                {uvTools.map((items) => (
                  <Tools key={items[0].name} items={items} tight={items[0].name === 'stackUp'} />
                ))}
              </ToolBar>
              <UvEditor />
            </ViewColumn>
          </Views>
        </Upper>
        <Lower>
          <Materials />
          <Attributes />
          <UvMapping />
        </Lower>
        <StatusBar>
          <Burger />
        </StatusBar>
      </Shell>
    </>
  )
}

const GlobalStyle = createGlobalStyle`
  * {
    box-sizing: border-box;
  }
  body {
    margin: 0;
    background: #3d3d3d;
    color: #cfcfcf;
    font-family: 'Open Sans', 'Noto Sans CJK KR', sans-serif;
    font-size: 11px;
    line-height: 16px;
  }
  button, input, select {
    font: inherit;
    color: inherit;
    margin: 0;
    padding: 0;
    border: 0;
    background: none;
  }
  svg {
    display: block;
    flex: none;
  }
`

const Shell = styled.div`
  display: flex;
  flex-direction: column;
  min-height: 100vh;
`

const Title = styled.header`
  display: flex;
  align-items: center;
  height: 23px;
  padding: 0 1px 0 2px;
  background: #fff;
  color: #000;
  h1 {
    flex: 1;
    margin: 0 0 0 5px;
    font-size: 12px;
    font-weight: 400;
  }
`

const WindowButtons = styled.div`
  display: flex;
  button {
    display: grid;
    place-items: center;
    width: 46px;
    height: 22px;
  }
`

const MenuBar = styled.div`
  display: flex;
  align-items: center;
  height: 22px;
  padding-left: 1px;
  > button {
    width: 24px;
  }
`

const Fill = styled.div`
  flex: 1;
`

const Menu = styled.nav`
  display: flex;
`

const MenuButton = styled.button`
  padding: 0 6px 0 7px;
  white-space: nowrap;
  color: ${({ $hot }) => ($hot ? '#dcdc8c' : '#cfcfcf')};
`

const BarLabel = styled.span`
  margin: 0 6px 0 ${({ $wide }) => ($wide ? 31 : 0)}px;
`

const SelectBox = styled.div`
  display: grid;
  align-items: center;
  width: ${({ $width }) => $width}px;
  height: ${({ $off }) => ($off ? 19 : 18)}px;
  border-radius: 3px;
  background: ${({ $off }) => ($off ? '#484848' : '#595959')};
  color: ${({ $off }) => ($off ? '#7d7d7d' : '#d4d4d4')};
  select {
    grid-area: 1 / 1;
    width: 100%;
    padding-left: 7px;
    appearance: none;
    opacity: 1;
  }
  svg {
    grid-area: 1 / 1;
    justify-self: end;
    margin-right: 4px;
    pointer-events: none;
  }
`

const SmallButton = styled.button`
  display: grid;
  place-items: center;
  width: 20px;
  height: 20px;
  color: ${({ $dim }) => ($dim ? '#5a5a5a' : '#999')};
`

const IconRow = styled.div`
  display: flex;
`

const BurgerButton = styled.button`
  display: grid;
  gap: 2px;
  width: 14px;
  margin: 0 3px 0 5px;
  span {
    height: 2px;
    background: ${({ $bright }) => ($bright ? '#e6e6e6' : '#999')};
  }
`

const Upper = styled.div`
  display: flex;
`

const SideBar = styled.div`
  display: flex;
  flex-direction: column;
  align-items: flex-start;
  gap: 12px;
  width: 39px;
  padding: 6px 0 5px 1px;
`

const Grip = styled.div`
  flex: none;
  background-image: radial-gradient(circle, #858585 0 0.500px, transparent 1px);
  background-size: 3px 3px;
  ${({ $flat }) =>
    $flat
      ? css`
          width: 27px;
          height: 6px;
          margin: 0 0 -10px 3px;
        `
      : css`
          width: 6px;
          height: 30px;
          margin: 3px -10px 0 0;
        `}
`

const Views = styled.div`
  flex: 1;
  display: grid;
  grid-template-columns: 937fr 940fr;
  gap: 4px;
  min-width: 0;
  padding-bottom: 4px;
`

const ViewColumn = styled.div`
  display: flex;
  flex-direction: column;
  min-width: 0;
`

const ToolBar = styled.div`
  display: flex;
  gap: 12px;
  height: 44px;
  padding: 6px 0 0 1px;
  overflow: hidden;
  ${ViewColumn} + ${ViewColumn} & {
    padding-left: 0;
  }
`

const ToolGroup = styled.div`
  display: flex;
  flex: none;
  flex-direction: ${({ $column }) => ($column ? 'column' : 'row')};
  gap: 2px;
  align-self: flex-start;
  margin-left: ${({ $tight }) => ($tight ? -8 : 0)}px;
  border-radius: 3px;
  background: #4f4f4f;
  box-shadow: 0 0 0 1px #383838;
  overflow: hidden;
`

const ToolButton = styled.button`
  width: ${({ $half }) => ($half ? 15 : 34)}px;
  height: 34px;
  background: ${({ $active, $olive }) => ($active ? '#86a2cf' : $olive ? '#80843c' : '#595959')};
`

const Panel = styled.section`
  flex: 1;
  display: flex;
  flex-direction: column;
  border: 1px solid #505050;
  min-height: 0;
`

const PanelHead = styled.div`
  display: flex;
  align-items: center;
  height: 22px;
  padding-left: 1px;
  flex: none;
`

const Stage = styled.div`
  flex: 1;
  min-height: 0;
  contain: size;
  ${({ $framed }) =>
    $framed &&
    css`
      border: 1px solid #8c8c8c;
      background: #434343;
    `}
  svg {
    width: 100%;
    height: 100%;
  }
`

const PanelFoot = styled.div`
  height: 19px;
  padding: 1px 6px;
  border-top: 1px solid #505050;
`

const Lower = styled.div`
  flex: 1;
  display: grid;
  grid-template-columns: 639fr 671fr 602fr;
  gap: 4px;
`

const Dock = styled.section`
  display: flex;
  flex-direction: column;
  min-width: 0;
`

const TabBar = styled.div`
  display: flex;
  align-items: flex-end;
  height: 23px;
  background: #323232;
`

const Tab = styled.button`
  position: relative;
  height: 21px;
  padding: 0 5px 2px;
  white-space: nowrap;
  border-radius: 3px 3px 0 0;
  background: ${({ $active }) => ($active ? '#3d3d3d' : 'transparent')};
  color: ${({ $active }) => ($active ? '#e0e0e0' : '#858585')};
`

const TabMark = styled.div`
  position: absolute;
  inset: -1px 0 -3px 1px;
  pointer-events: none;
  svg {
    overflow: visible;
  }
`

const DockBody = styled.div`
  flex: 1;
  border: 1px solid #505050;
  border-bottom-color: #484848;
`

const DockHead = styled.div`
  display: flex;
  align-items: center;
  height: 23px;
  padding-bottom: 2px;
  border-bottom: 1px solid #505050;
`

const BlendRow = styled.div`
  display: flex;
  align-items: center;
  height: 24px;
  padding: 0 3px 0 2px;
  border-bottom: 1px solid #505050;
`

const Percent = styled.div`
  display: flex;
  align-items: center;
  width: 60px;
  height: 18px;
  padding: 0 2px 0 5px;
  border-radius: 3px 0 0 3px;
  background: #323232;
  input {
    width: 45px;
    flex: 1;
  }
`

const Slider = styled.input`
  flex: 1;
  min-width: 0;
  height: 18px;
  margin: 0 4px 0 1px;
  appearance: none;
  background: #666;
  border-radius: 0 3px 3px 0;
  &::-webkit-slider-thumb {
    appearance: none;
    width: 3px;
    height: 18px;
    background: #86a2cf;
  }
`

const LayerRow = styled.div`
  position: relative;
  display: flex;
  height: ${({ $tall }) => ($tall ? 32 : 25)}px;
  margin-right: 3px;
  border-bottom: 1px solid #505050;
`

const LayerCell = styled.div`
  display: flex;
  align-items: flex-start;
  width: ${({ $wide }) => ($wide ? 95 : 32)}px;
  padding-left: 1px;
  border-right: 1px solid #505050;
`

const Channel = styled.div`
  display: grid;
  grid-template-columns: 9px 12px;
  grid-template-rows: 14px 14px;
  width: 24px;
  height: 31px;
  margin-left: 1px;
  border: 1px solid #86a2cf;
  background: linear-gradient(#000, #000) right bottom / 10px 10px no-repeat;
  overflow: hidden;
  i {
    width: 14px;
    height: 11px;
    border: 1px solid #000;
    background: #fff;
  }
`

const Swatch = styled.div`
  width: 24px;
  height: 24px;
  margin-left: 1px;
  border: 1px solid #86a2cf;
  background: #bfbfbf;
  box-shadow: inset 0 0 0 1px #2c2c2c;
`

const RowMark = styled.div`
  position: absolute;
  left: -1px;
  top: -5px;
  width: 172px;
  height: 33px;
  pointer-events: none;
  svg {
    overflow: visible;
  }
`

const MaterialName = styled.span`
  width: ${({ $short }) => ($short ? 25 : 34)}px;
  height: 24px;
  margin: 0 ${({ $short }) => ($short ? 18 : 9)}px 0 5px;
  padding: 4px 2px;
  background: #565656;
`

const Arrow = styled.i`
  align-self: center;
  border: 4px solid transparent;
  border-left-color: #d0d0d0;
  border-right-width: 0;
`

const MappingBody = styled.div`
  padding: 4px 3px;
  h2 {
    margin: 6px 1px 5px;
    font-size: 11px;
    line-height: 16px;
    color: #f0f0f0;
  }
`

const Segments = styled.div`
  display: grid;
  grid-template-columns: repeat(5, 96px);
  gap: 1px;
  width: fit-content;
  border-radius: 3px;
  overflow: hidden;
`

const Segment = styled.button`
  height: 18px;
  white-space: nowrap;
  background: ${({ $active }) => ($active ? '#86a2cf' : '#595959')};
  color: ${({ $active }) => ($active ? '#151515' : '#cfcfcf')};
`

const ProjectionGrid = styled.div`
  display: grid;
  grid-template-columns: repeat(4, 63px);
  gap: 4px;
  button {
    height: 19px;
    padding-bottom: 1px;
    border-radius: 3px;
    background: #484848;
    color: #7d7d7d;
  }
`

const FitRow = styled.div`
  display: flex;
  align-items: flex-start;
  gap: 4px;
  margin-top: 3px;
  color: #8a8a8a;
  label {
    display: flex;
    align-items: center;
    gap: 3px;
  }
  input {
    appearance: none;
    width: 12px;
    height: 12px;
    border: 1px solid #5c5c5c;
    border-radius: 2px;
  }
`

const StatusBar = styled.footer`
  display: flex;
  align-items: center;
  height: 23px;
  margin-top: 4px;
  border-top: 1px solid #505050;
`

export default App
